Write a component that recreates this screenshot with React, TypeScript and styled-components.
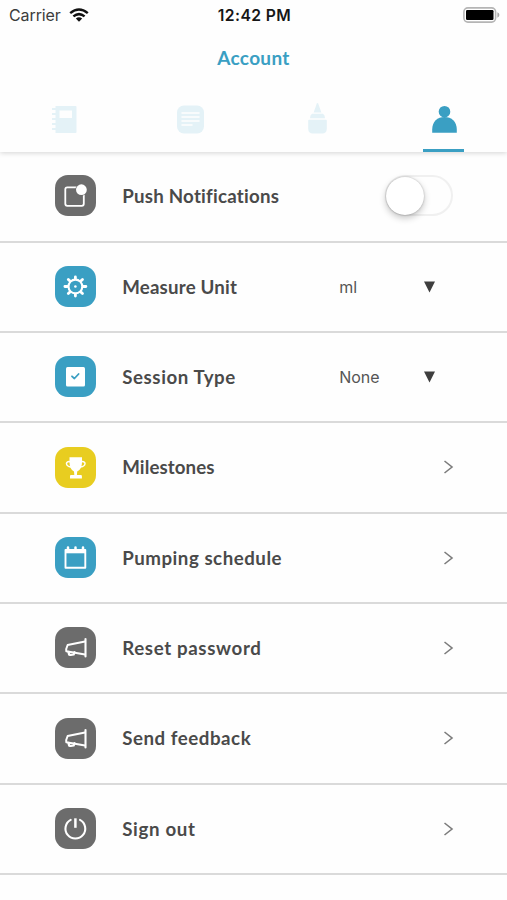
import React from "react";
import styled, { createGlobalStyle } from "styled-components";

const BLUE = "#3a9fc3";
const GREY = "#6c6c6c";
const YELLOW = "#e8cd20";
const PALE = "#e4f2f7";

const GlobalStyle = createGlobalStyle`
  * { box-sizing: border-box; }
  body { margin: 0; background: #fff; }
`;

const Screen = styled.div`
  width: 507px;
  height: 900px;
  overflow: hidden;
  background: #fefefe;
  font-family: Lato, "Noto Sans", sans-serif;
`;

const Header = styled.header`
  height: 152px;
  background: #fefefe;
  box-shadow: 0 1px 5px rgba(0, 0, 0, 0.17);
`;

const StatusBar = styled.div`
  display: grid;
  grid-template-columns: 1fr auto 1fr;
  align-items: center;
  height: 30px;
  padding: 0 7px 0 9px;
  font-family: Inter, sans-serif;
  font-size: 16px;
  color: #3c3c3c;
`;

const Carrier = styled.div`
  display: flex;
  align-items: center;
  gap: 8px;
  letter-spacing: -0.1px;
`;

const Clock = styled.div`
  font-size: 15.7px;
  font-weight: 600;
  letter-spacing: 0.4px;
  color: #161616;
`;

const Battery = styled.div`
  display: flex;
  justify-content: flex-end;
`;

const Title = styled.h1`
  display: flex;
  align-items: center;
  justify-content: center;
  height: 54px;
  margin: 0;
  font-size: 19px;
  font-weight: 700;
  letter-spacing: 0.3px;
  color: ${BLUE};
`;

const Tabs = styled.nav`
  display: grid;
  grid-template-columns: repeat(4, 1fr);
  height: 68px;
`;

const Tab = styled.div<{ $active?: boolean }>`
  display: flex;
  justify-content: center;
  width: 41px;
  margin: 0 auto;
  padding-top: 17px;
  border-bottom: 3px solid ${(p) => (p.$active ? BLUE : "transparent")};
`;

const List = styled.main`
  display: flex;
  flex-direction: column;
  padding-top: 0.5px;
`;

const Row = styled.div`
  display: grid;
  grid-template-columns: 67.5px 217px 1fr;
  align-items: center;
  height: 90.33px;
  padding: 0 53px 0.7px 54.7px;
  border-bottom: 2px solid #dadada;

  &:first-child { padding-bottom: 2px; }
`;

const Badge = styled.div<{ $color: string }>`
  width: 41px;
  height: 41px;
  border-radius: 13px;
  background: ${(p) => p.$color};

  svg { display: block; }
`;

const Label = styled.span<{ $tracking: number }>`
  font-size: 18.7px;
  font-weight: 700;
  letter-spacing: ${(p) => p.$tracking}px;
  white-space: nowrap;
  color: #4a4a4a;
`;

const Picker = styled.div`
  display: flex;
  align-items: center;
  justify-content: space-between;
  padding-right: 19px;
  font-family: Inter, sans-serif;
  font-size: 16px;
  color: #555;
`;

const Trailing = styled.div`
  display: flex;
  justify-content: flex-end;
`;

const Toggle = styled.div`
  display: flex;
  align-items: center;
  width: 68px;
  height: 41px;
  margin-right: 1px;
  border: 2px solid #f0f0f0;
  border-radius: 21px;
`;

const Knob = styled.div`
  width: 38px;
  height: 38px;
  margin-left: -1.5px;
  border-radius: 50%;
  background: #fff;
  box-shadow: 0 3px 7px rgba(0, 0, 0, 0.24), 0 0 2px rgba(0, 0, 0, 0.26);
`;

const WifiIcon = () => (
  <svg width="20" height="14" viewBox="0 0 20 14">
    <g fill="none" stroke="#111" strokeWidth="2.5">
      <path d="M1.2 5.1Q10-2.2 18.8 5.1" />
      <path d="M4.4 8.4Q10 3.8 15.6 8.4" />
    </g>
    <path d="M6.8 10.5Q10 7.8 13.2 10.5L10 13.7Z" fill="#111" />
  </svg>
);

const BatteryIcon = () => (
  <svg width="37" height="16" viewBox="0 0 37 16">
    <rect x=".9" y=".9" width="31.7" height="14.2" rx="4" fill="#fff" stroke="#b5b5b5" strokeWidth="1.6" />
    <rect x="3" y="3" width="27.5" height="10" rx="1.2" fill="#000" />
    <path d="M34.4 5.3q2 .8 2 2.700t-2 2.700z" fill="#a8a8a8" />
  </svg>
);

const NotebookIcon = () => (
  <svg width="27" height="36" viewBox="-1.5 0 27 36">
    <path d="M4 5h20q1 0 1 1v25q0 1-1 1H4z" fill={PALE} />
    <path d="M.5 8h5M.5 13h5M.5 18h5M.5 23h5M.5 28h5" stroke={PALE} strokeWidth="2" />
    <rect x="8" y="9.500" width="12.500" height="7.500" fill="#fefefe" />
  </svg>
);

const NotesIcon = () => (
  <svg width="28" height="36" viewBox="-0.5 0 28 36">
    <rect x="0.500" y="4.500" width="27" height="28" rx="7" fill={PALE} />
    <path d="M5 12h18M5 16h18M5 20h18M5 24h11" stroke="#fefefe" strokeWidth="1.700" />
  </svg>
);

const BottleIcon = () => (
  <svg width="20" height="36" viewBox="-0.5 0.5 20 36">
    <g fill={PALE}>
      <path d="M10 2.500q1 0 1.200 2l2.700 7.500H6.100l2.700-7.500q.2-2 1.200-2z" />
      <path d="M4.500 13.300h11q2 1.300 2 4.400h-15q0-3 2-4.400z" />
      <path d="M1.500 19.200h17q.8 0 .8 1v8q0 4.800-4.800 4.800h-9Q.7 33 .7 28.200v-8q0-1 .8-1z" />
    </g>
  </svg>
);

const PersonIcon = () => (
  <svg width="26" height="36" viewBox="-0.500 -0.500 26 36">
    <circle cx="13" cy="10.200" r="5.800" fill={BLUE} />
    <path d="M.7 31.200V28C.7 20 6 15.500 13 15.500S25.300 20 25.300 28v3.200z" fill={BLUE} />
  </svg>
);

const Glyph = ({ children }: { children: React.ReactNode }) => (
  <svg width="41" height="41" viewBox="0 0 41 41" fill="none" stroke="#fff" strokeLinecap="round" strokeLinejoin="round">
    {children}
  </svg>
);

const PushGlyph = () => (
  <Glyph>
    <rect x="10.300" y="12.300" width="18.500" height="18.500" rx="2" strokeWidth="1.800" />
    <circle cx="26.400" cy="14.700" r="6" fill={GREY} stroke="none" />
    <circle cx="26.400" cy="14.700" r="5.400" fill="#fff" stroke="none" />
  </Glyph>
);

const GearGlyph = () => (
  <Glyph>
    <circle cx="20.400" cy="20.500" r="6.900" strokeWidth="2.100" />
    <circle cx="20.400" cy="20.500" r="1.300" fill="#fff" stroke="none" />
    <path
      d="M20.400 12.500v-1.500M20.400 28.500v1.500M12.400 20.500h-2.500M28.400 20.500h2.500M14.700 14.800l-1.400-1.400M26.100 26.200l1.400 1.400M26.100 14.800l1.400-1.400M14.700 26.200l-1.400 1.400"
      strokeWidth="2.800"
    />
  </Glyph>
);

const CheckGlyph = () => (
  <Glyph>
    <rect x="11" y="11" width="19" height="19.500" rx="1.500" fill="#fff" stroke="none" />
    <path d="M17 20.300l2.400 2.200 4.200-4.500" stroke={BLUE} strokeWidth="1.800" />
  </Glyph>
);

const TrophyGlyph = () => (
  <Glyph>
    <path d="M14.500 10.300h12.500v5q0 7-4.800 9.300l-.3 3.500h4q1 0 1 1v2.400H15v-2.400q0-1 1-1h3.300l-.3-3.500q-4.500-2.300-4.500-9.300z" fill="#fff" stroke="none" />
    <path d="M15 14.700c-5-.8-4.700 4.500 1 5.300M26.500 14.700c5-.8 4.700 4.500-1 5.300" strokeWidth="1.500" />
  </Glyph>
);

const CalendarGlyph = () => (
  <Glyph>
    <rect x="10.500" y="13" width="19.800" height="17.700" strokeWidth="1.900" />
    <path d="M10.500 14.200h19.800" strokeWidth="4.200" strokeLinecap="butt" />
    <path d="M13 12v-1.500M20.500 12v-1.500M28 12v-1.500" strokeWidth="2.500" />
  </Glyph>
);

const MegaphoneGlyph = () => (
  <Glyph>
    <path d="M30.500 12v17.500" strokeWidth="2.100" />
    <path d="M30 14.500L12.600 18.100q-1.900 4-1.300 6.200L30 27.600" strokeWidth="2" />
    <path d="M13.500 25l.7 2.700q2 .4 4.400-.2l.9-2.200" strokeWidth="2.300" />
  </Glyph>
);

const PowerGlyph = () => (
  <Glyph>
    <path d="M15.700 11.900A9.900 9.900 0 1 0 25 11.900" strokeWidth="2.100" />
    <path d="M20.400 10.300v9.500" strokeWidth="2.500" strokeLinecap="butt" />
  </Glyph>
);

const DownArrow = () => (
  <svg width="11" height="12" viewBox="0 0 11 12">
    <path d="M0 .5h11L5.500 11.500z" fill="#3e3e3e" />
  </svg>
);

const Chevron = () => (
  <svg width="11" height="14" viewBox="0 0 11 14">
    <path d="M1.500 1l7.500 6-7.500 6" fill="none" stroke="#7c7c7c" strokeWidth="1.600" />
  </svg>
);

const Disclosure = () => (
  <Trailing>
    <Chevron />
  </Trailing>
);

const Choice = ({ value }: { value: string }) => (
  <Picker>
    {value}
    <DownArrow />
  </Picker>
);

const rows = [
  {
    label: "Push Notifications", color: GREY, tracking: 0.24, icon: <PushGlyph />,
    control: <Trailing><Toggle><Knob /></Toggle></Trailing>,
  },
  { label: "Measure Unit", color: BLUE, tracking: 0.2, icon: <GearGlyph />, control: <Choice value="ml" /> },
  { label: "Session Type", color: BLUE, tracking: 0.58, icon: <CheckGlyph />, control: <Choice value="None" /> },
  { label: "Milestones", color: YELLOW, tracking: 0.1, icon: <TrophyGlyph />, control: <Disclosure /> },
  { label: "Pumping schedule", color: BLUE, tracking: 0.52, icon: <CalendarGlyph />, control: <Disclosure /> },
  { label: "Reset password", color: GREY, tracking: 0.64, icon: <MegaphoneGlyph />, control: <Disclosure /> },
  { label: "Send feedback", color: GREY, tracking: 0.54, icon: <MegaphoneGlyph />, control: <Disclosure /> },
  { label: "Sign out", color: GREY, tracking: 0.66, icon: <PowerGlyph />, control: <Disclosure /> },
];

export default function App() {
  return (
    <Screen>
      <GlobalStyle />
      <Header>
        <StatusBar>
          <Carrier>
            Carrier
            <WifiIcon />
          </Carrier>
          <Clock>12:42 PM</Clock>
          <Battery>
            <BatteryIcon />
          </Battery>
        </StatusBar>
        <Title>Account</Title>
        <Tabs>
          <Tab><NotebookIcon /></Tab>
          <Tab><NotesIcon /></Tab>
          <Tab><BottleIcon /></Tab>
          <Tab $active><PersonIcon /></Tab>
        </Tabs>
      </Header>
      <List>
        {rows.map((row) => (
          <Row key={row.label}>
            <Badge $color={row.color}>{row.icon}</Badge>
            <Label $tracking={row.tracking}>{row.label}</Label>
            {row.control}
          </Row>
        ))}
      </List>
    </Screen>
  );
}
